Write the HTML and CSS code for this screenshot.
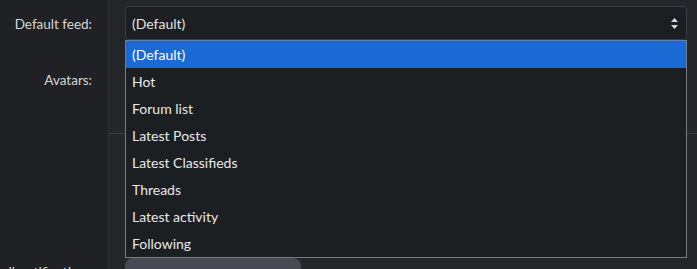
FILE: index.html
```html
<!DOCTYPE html>
<html>
<head>
<meta charset="utf-8">
<link rel="stylesheet" href="styles.css">
</head>
<body>
<div class="form">
  <div class="row row-feed">
    <div class="label">Default feed:</div>
    <div class="field">
      <div class="select">
        <span class="select-value">(Default)</span>
        <svg class="arrows" width="7" height="11" viewBox="0 0 7 11"><path d="M3.5 0 L7 4 L0 4 Z" fill="#d8d8d8"/><path d="M3.5 11 L7 7 L0 7 Z" fill="#d8d8d8"/></svg>
      </div>
      <ul class="menu">
        <li class="option selected">(Default)</li>
        <li class="option">Hot</li>
        <li class="option">Forum list</li>
        <li class="option">Latest Posts</li>
        <li class="option">Latest Classifieds</li>
        <li class="option">Threads</li>
        <li class="option">Latest activity</li>
        <li class="option">Following</li>
      </ul>
    </div>
  </div>
  <div class="row row-avatars">
    <div class="label">Avatars:</div>
    <div class="field sep"></div>
  </div>
  <div class="row row-notif">
    <div class="label nowrap">Email notifications:</div>
    <div class="field">
      <div class="button"></div>
    </div>
  </div>
</div>
</body>
</html>
```
FILE: styles.css
```css
html, body {
  margin: 0;
  padding: 0;
  height: 100%;
  overflow: hidden;
}
body {
  background: #25262a;
  font-family: "Lato", "Noto Sans", sans-serif;
  font-size: 14px;
  color: #e3e3e3;
}
.form {
  display: flex;
  flex-direction: column;
}
.row {
  display: grid;
  grid-template-columns: 109px 1fr;
}
.label {
  background: #202124;
  border-right: 1px solid #2f3136;
  text-align: right;
  padding-right: 16px;
  color: #d3d7dc;
  line-height: 20px;
  font-size: 13.5px;
  box-sizing: border-box;
}
.nowrap {
  white-space: nowrap;
  direction: rtl;
  overflow: hidden;
}
.field {
  position: relative;
  padding: 0 10px 0 16px;
}
.row-feed .label {
  padding-top: 14px;
}
.row-feed .field {
  padding-top: 6px;
  padding-bottom: 4px;
}
.select {
  height: 32px;
  border: 1px solid #373c4a;
  border-radius: 4px;
  background: #1c1e21;
  display: flex;
  align-items: center;
  justify-content: space-between;
  padding: 0 8px 0 6px;
}
.arrows {
  display: block;
}
.row-avatars .label {
  height: 90px;
  padding-top: 26px;
}
.sep {
  border-bottom: 1px solid #3a3c42;
}
.row-notif .label {
  padding-top: 128px;
  height: 140px;
}
.row-notif .field {
  padding-top: 124px;
}
.button {
  width: 176px;
  height: 30px;
  background: #474a53;
  border-radius: 8px;
}
.menu {
  position: absolute;
  top: 40px;
  left: 16px;
  right: 10px;
  margin: 0;
  padding: 0;
  list-style: none;
  background: #1c1f22;
  border: 1px solid #7c7c7c;
  z-index: 2;
}
.option {
  height: 27px;
  line-height: 27px;
  padding-left: 6px;
  color: #e8e8e8;
}
.option.selected {
  background: #1a69d5;
  color: #ffffff;
}
```
